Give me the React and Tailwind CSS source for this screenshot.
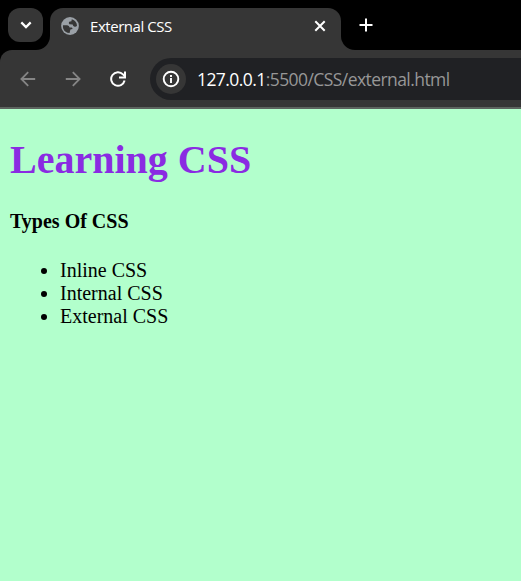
function Globe() {
  return (
    <svg className="h-[18px] w-[18px] shrink-0" viewBox="0 0 18 18">
      <circle cx="9" cy="9" r="8.9" fill="#9aa0a6" />
      <path d="M2 8.2 L6.2 8.2 Q8.4 8.4 8.6 10.4 L10.6 10.4 Q11.6 10.6 11.5 11.9 L9.4 12.6 L8.6 15.9 Q3.8 15.8 2.2 11.4 Q1.8 9.6 2 8.2Z M10.8 2.2 Q15.8 3.7 16 8.8 Q15.2 10 13.6 9.7 Q11.9 9.4 11.7 7.6 L8.4 7.3 Q7.2 6 8.2 4.7 L10.4 4.3Z" fill="#363636" />
    </svg>
  );
}

function Arrow({ flipped }) {
  return (
    <svg className={flipped ? "h-4 w-4 shrink-0 rotate-180" : "h-4 w-4 shrink-0"} viewBox="0 0 16 16" fill="none" stroke="#858585" strokeWidth="1.8">
      <path d="M15.2 8H1.8M8.2 1.2L1.4 8l6.8 6.8" />
    </svg>
  );
}

function TabStrip() {
  return (
    <div className="flex h-[50px] bg-[#363636]">
      <div className="w-[50px] rounded-br-[14px] bg-black pl-2 pt-2">
        <button className="flex h-[34px] w-[35px] items-center justify-center rounded-[12px] bg-[#363636]">
          <svg className="h-[10px] w-3" viewBox="0 0 12 10" fill="none" stroke="#fff" strokeWidth="2.2">
            <path d="M1.3 2.4L6 7.1l4.7-4.7" />
          </svg>
        </button>
      </div>
      <div className="h-[30px] w-[291px] bg-black pt-[7.5px]">
        <div className="flex h-[36px] items-center rounded-t-[13px] bg-[#363636] pl-[11px] pr-[15px]">
          <Globe />
          <span className="ml-[11px] whitespace-nowrap font-['Open_Sans',sans-serif] text-[15px] leading-5 tracking-[-0.45px] text-white">External CSS</span>
          <svg className="ml-auto h-3 w-3" viewBox="0 0 12 12" fill="none" stroke="#fff" strokeWidth="2">
            <path d="M1.3 1.3l9.4 9.4M10.7 1.3l-9.4 9.4" />
          </svg>
        </div>
      </div>
      <div className="flex-1 rounded-bl-[14px] bg-black pl-[18px] pt-[18px]">
        <svg className="h-[14px] w-[14px]" viewBox="0 0 14 14" stroke="#fff" strokeWidth="2">
          <path d="M.5 7h13M7 .5v13" />
        </svg>
      </div>
    </div>
  );
}

function Toolbar() {
  return (
    <div className="bg-black">
      <div className="flex h-[59px] items-start rounded-tl-[12px] border-b-2 border-[#5d645f] bg-[#363636] pl-5 pt-2">
        <div className="flex h-[42px] w-[130px] shrink-0 items-center">
          <Arrow />
          <div className="ml-[28.5px] flex"><Arrow flipped /></div>
          <svg className="ml-[29px] h-4 w-4" viewBox="0 0 16 16" fill="none" stroke="#fff" strokeWidth="2">
            <path d="M14.6 9.6A6.8 6.8 0 1 1 13 3.4L15 5.5" />
            <path d="M15 .5v6H9" />
          </svg>
        </div>
        <div className="flex h-[42px] flex-1 items-center rounded-l-full bg-[#202124] pl-1.5">
          <div className="flex h-[30px] w-[30px] shrink-0 items-center justify-center rounded-full bg-[#363636]">
            <svg className="h-[18px] w-[18px]" viewBox="0 0 18 18" fill="none" stroke="#fff" strokeWidth="1.9">
              <circle cx="9" cy="9" r="7.3" />
              <path d="M9 8v5M9 5v1.9" />
            </svg>
          </div>
          <p className="ml-[11px] whitespace-nowrap font-['Open_Sans',sans-serif] text-[17.5px] leading-6 tracking-[-0.57px] text-[#979797]">
            <span className="text-white">127.0.0.1</span>:5500/CSS/external.html
          </p>
        </div>
      </div>
    </div>
  );
}

export default function App() {
  return (
    <div className="flex h-screen flex-col overflow-hidden">
      <TabStrip />
      <Toolbar />
      <main className="flex-1 bg-[#b2ffcc] pl-[10px] pt-[27px] font-['Liberation_Serif',serif] text-[20px] leading-[23px] text-black">
        <h1 className="text-[40px] font-bold leading-[48px] text-[#8a2be2]">Learning CSS</h1>
        <h4 className="mt-[26px] font-bold">Types Of CSS</h4>
        <ul className="mt-[26px] list-disc pl-[50px]">
          <li>Inline CSS</li>
          <li>Internal CSS</li>
          <li>External CSS</li>
        </ul>
      </main>
    </div>
  );
}
